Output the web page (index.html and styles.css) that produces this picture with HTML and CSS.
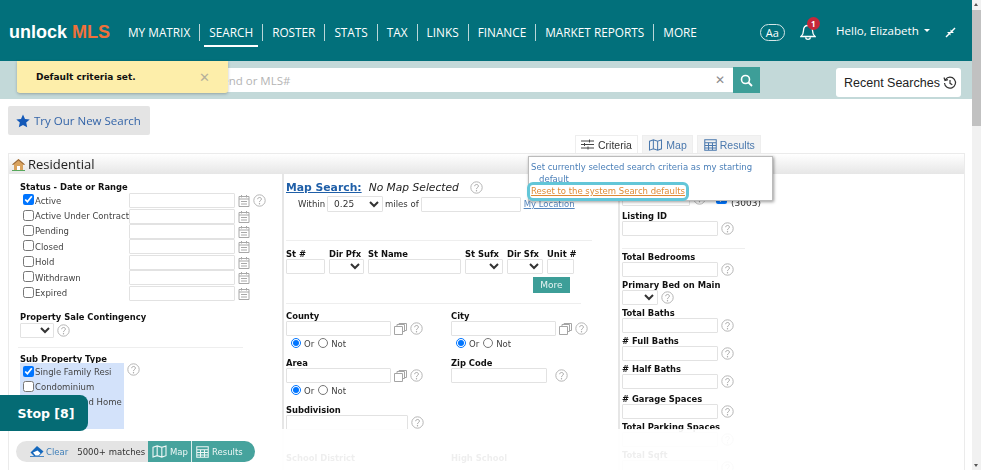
FILE: index.html
```html
<!DOCTYPE html>
<html lang="en">
<head>
  <meta charset="UTF-8">
  <meta name="viewport" content="width=device-width, initial-scale=1.0">
  <title>unlock MLS</title>
  <link rel="stylesheet" href="styles.css">
</head>
<body>

  <svg class="defs" width="0" height="0">
    <symbol id="help" viewBox="0 0 13 13">
      <circle cx="6.5" cy="6.5" r="5.7" fill="none" stroke="#b5b5b5" stroke-width="1"/>
      <path d="M4.7 5.2c0-2.3 3.7-2.3 3.7-.1 0 1.400-1.900 1.400-1.900 3" fill="none" stroke="#a5a5a5" stroke-width="1"/>
      <circle cx="6.500" cy="9.700" r=".7" fill="#a5a5a5"/>
    </symbol>
    <symbol id="cal" viewBox="0 0 12 13">
      <path d="M1 2.500h10v10h-10zM1 5h10M3.500 1v2.500M8.500 1v2.500" fill="none" stroke="#a8a8a8"/>
      <path d="M3 7h6v1h-6zM3 9.500h6v1h-6z" fill="#a8a8a8"/>
    </symbol>
    <symbol id="copy" viewBox="0 0 13 12">
      <path d="M.5 3.500h8v8h-8zM3 3.500v-2h7.500v7h-2M5 1.500v-1h7.500v7h-2" fill="none" stroke="#a5a5a5"/>
    </symbol>
    <symbol id="map" viewBox="0 0 16 14">
      <path d="M1 2.500l4.500-1.500 5 1.500 4.500-1.500v10.500l-4.500 1.500-5-1.500-4.500 1.500zM5.500 1v10.500M10.500 2.500v10.500" fill="none" stroke="currentColor" stroke-width="1.200"/>
    </symbol>
    <symbol id="grid" viewBox="0 0 15 14">
      <path d="M.8.800h13.400v12.400h-13.400zM.8 4.500h13.400M.8 7.500h13.400M.8 10.500h13.400M5.200 4.500v8.700M9.800 4.500v8.700" fill="none" stroke="currentColor" stroke-width="1.200"/>
    </symbol>
  </svg>

  <div class="page">
    <div class="main">
      <header class="topbar">
        <div class="logo">unlock <span>MLS</span></div>
        <nav class="nav">
          <a href="#">MY MATRIX</a>
          <a href="#" class="active">SEARCH</a>
          <a href="#">ROSTER</a>
          <a href="#">STATS</a>
          <a href="#">TAX</a>
          <a href="#">LINKS</a>
          <a href="#">FINANCE</a>
          <a href="#">MARKET REPORTS</a>
          <a href="#">MORE</a>
        </nav>
        <div class="aa">Aa</div>
        <div class="bell">
          <svg width="16" height="18" viewBox="0 0 16 18"><path d="M8 2.500c-3 0-4.500 2.200-4.500 5 0 3-1 4.500-2.500 6h14c-1.500-1.500-2.500-3-2.500-6 0-2.800-1.500-5-4.500-5zM5.500 14.500c.5 2.400 4.500 2.400 5 0" fill="none" stroke="#fff" stroke-width="1.300"/></svg>
          <span class="badge">1</span>
        </div>
        <div class="hello">Hello, Elizabeth <i class="caret"></i></div>
        <svg class="shrink" width="11" height="11" viewBox="0 0 11 11"><path d="M10.500 1.500l-3 3 1.500 1.500h-3.500v-3.500l1 1 3-3zM.5 9.500l3-3-1.500-1.500h3.500v3.500l-1-1-3 3z" fill="#fff"/></svg>
      </header>

      <div class="searchbar">
        <input class="quick" type="text" placeholder="Address, Street, Legend or MLS#">
        <span class="quick-x">&#10005;</span>
        <button class="quick-go">
          <svg width="13" height="13" viewBox="0 0 13 13"><circle cx="5.500" cy="5.500" r="4" fill="none" stroke="#fff" stroke-width="1.600"/><path d="M8.500 8.500l3.500 3.500" stroke="#fff" stroke-width="1.800"/></svg>
        </button>
        <button class="recent">Recent Searches
          <svg width="14" height="14" viewBox="0 0 14 14"><path d="M2.500 3.500a5.500 5.500 0 1 1-1 3.500M1 1.500l1 3 3-.8M7 4v3.300l2.300 1.400" fill="none" stroke="#333" stroke-width="1.200"/></svg>
        </button>
      </div>

      <div class="content">
        <button class="try">
          <svg width="14" height="14" viewBox="0 0 14 14"><path d="M7 .5l2 4.400 4.700.5-3.500 3.200 1 4.700-4.200-2.400-4.200 2.400 1-4.700-3.500-3.200 4.700-.5z" fill="#1459b8"/></svg>
          Try Our New Search
        </button>

        <div class="tabs">
          <a href="#" class="tab current">
            <svg width="13" height="11" viewBox="0 0 13 11"><path d="M0 2h13M0 5.500h13M0 9h13M8.500 .5v3M3.500 4v3M7 7.500v3" fill="none" stroke="#444"/></svg>
            Criteria
          </a>
          <a href="#" class="tab"><svg width="15" height="12"><use href="#map"/></svg>Map</a>
          <a href="#" class="tab"><svg width="13" height="12"><use href="#grid"/></svg>Results</a>
        </div>

        <section class="panel">
          <h2 class="panel-title">
            <svg width="13" height="13" viewBox="0 0 13 13"><path d="M6.500 1l6 5.500h-1.500v5.500h-9v-5.500h-1.500z" fill="#d9a35f"/><path d="M0 6.500l6.500-5.500 6.500 5.500-1 .5-5.500-4.500-5.500 4.500z" fill="#9a6a3a"/><path d="M5 8h3v4h-3z" fill="#fff"/><path d="M0 12h13v1h-13z" fill="#57a85c"/></svg>
            Residential
          </h2>

          <div class="columns">
            <div class="col col-status">
              <div class="label">Status - Date or Range</div>
              <div class="status-row first">
                <label class="check"><input type="checkbox" checked>Active</label>
                <input class="box range" type="text">
                <svg class="ico" width="12" height="13"><use href="#cal"/></svg>
                <svg class="ico" width="13" height="13"><use href="#help"/></svg>
              </div>
              <div class="status-row">
                <label class="check"><input type="checkbox">Active Under Contract</label>
                <input class="box range" type="text">
                <svg class="ico" width="12" height="13"><use href="#cal"/></svg>
              </div>
              <div class="status-row">
                <label class="check"><input type="checkbox">Pending</label>
                <input class="box range" type="text">
                <svg class="ico" width="12" height="13"><use href="#cal"/></svg>
              </div>
              <div class="status-row">
                <label class="check"><input type="checkbox">Closed</label>
                <input class="box range" type="text">
                <svg class="ico" width="12" height="13"><use href="#cal"/></svg>
              </div>
              <div class="status-row">
                <label class="check"><input type="checkbox">Hold</label>
                <input class="box range" type="text">
                <svg class="ico" width="12" height="13"><use href="#cal"/></svg>
              </div>
              <div class="status-row">
                <label class="check"><input type="checkbox">Withdrawn</label>
                <input class="box range" type="text">
                <svg class="ico" width="12" height="13"><use href="#cal"/></svg>
              </div>
              <div class="status-row">
                <label class="check"><input type="checkbox">Expired</label>
                <input class="box range" type="text">
                <svg class="ico" width="12" height="13"><use href="#cal"/></svg>
              </div>

              <div class="label contingency">Property Sale Contingency</div>
              <div class="line">
                <select class="box pick-34"></select>
                <svg class="ico" width="13" height="13"><use href="#help"/></svg>
              </div>
              <hr class="rule rule-status">
              <div class="label">Sub Property Type</div>
              <div class="line top">
                <div class="sublist">
                  <label class="check"><input type="checkbox" checked>Single Family Resi</label>
                  <label class="check"><input type="checkbox">Condominium</label>
                  <label class="check"><input type="checkbox">Manufactured Home</label>
                  <label class="check"><input type="checkbox">Townhouse</label>
                </div>
                <svg class="ico" width="13" height="13"><use href="#help"/></svg>
              </div>
            </div>

            <div class="col col-address">
              <div class="map-head">
                <a href="#" class="map-link">Map Search:</a>
                <em>No Map Selected</em>
                <svg width="13" height="13"><use href="#help"/></svg>
              </div>
              <div class="within">
                <span>Within</span>
                <select class="box pick-56"><option>0.25</option></select>
                <span>miles of</span>
                <input class="box w-100" type="text">
                <a href="#" class="loc">My Location</a>
              </div>
              <hr class="rule rule-map">
              <div class="street">
                <div><div class="label">St #</div><input class="box w-39" type="text"></div>
                <div><div class="label">Dir Pfx</div><select class="box pick-35"></select></div>
                <div><div class="label">St Name</div><input class="box w-93" type="text"></div>
                <div><div class="label">St Sufx</div><select class="box pick-38"></select></div>
                <div><div class="label">Dir Sfx</div><select class="box pick-36"></select></div>
                <div><div class="label">Unit #</div><input class="box w-27" type="text"></div>
              </div>
              <button class="more">More</button>
              <hr class="rule rule-more">
              <div class="pair">
                <div class="pair-cell">
                  <div class="label">County</div>
                  <div class="line">
                    <input class="box w-105" type="text">
                    <svg class="ico" width="13" height="12"><use href="#copy"/></svg>
                    <svg class="ico" width="13" height="13"><use href="#help"/></svg>
                  </div>
                  <div class="ornot"><input type="radio" name="r1" checked>Or<input type="radio" name="r1">Not</div>
                </div>
                <div class="pair-cell">
                  <div class="label">City</div>
                  <div class="line">
                    <input class="box w-105" type="text">
                    <svg class="ico" width="13" height="12"><use href="#copy"/></svg>
                    <svg class="ico" width="13" height="13"><use href="#help"/></svg>
                  </div>
                  <div class="ornot"><input type="radio" name="r2" checked>Or<input type="radio" name="r2">Not</div>
                </div>
                <div class="pair-cell">
                  <div class="label">Area</div>
                  <div class="line">
                    <input class="box w-105" type="text">
                    <svg class="ico" width="13" height="12"><use href="#copy"/></svg>
                    <svg class="ico" width="13" height="13"><use href="#help"/></svg>
                  </div>
                  <div class="ornot"><input type="radio" name="r3" checked>Or<input type="radio" name="r3">Not</div>
                </div>
                <div class="pair-cell">
                  <div class="label">Zip Code</div>
                  <div class="line">
                    <input class="box w-96" type="text">
                    <svg class="ico zip-help" width="13" height="13"><use href="#help"/></svg>
                  </div>
                </div>
              </div>
              <div class="label">Subdivision</div>
              <div class="line">
                <input class="box w-122" type="text">
                <svg class="ico" width="13" height="13"><use href="#help"/></svg>
              </div>
              <div class="pair school">
                <div class="label">School District</div>
                <div class="label">High School</div>
              </div>
            </div>

            <div class="col col-detail">
              <div class="line partial">
                <input class="box w-68" type="text">
                <svg class="ico" width="13" height="13"><use href="#help"/></svg>
                <input class="partial-check" type="checkbox" checked>
                <span class="partial-count">(3003)</span>
              </div>
              <div class="field"><div class="label">Listing ID</div><div class="line"><input class="box w-96" type="text"><svg class="ico" width="13" height="13"><use href="#help"/></svg></div></div>
              <hr class="rule rule-detail">
              <div class="field"><div class="label">Total Bedrooms</div><div class="line"><input class="box w-96" type="text"><svg class="ico" width="13" height="13"><use href="#help"/></svg></div></div>
              <div class="field"><div class="label">Primary Bed on Main</div><div class="line"><select class="box pick-36"></select><svg class="ico" width="13" height="13"><use href="#help"/></svg></div></div>
              <div class="field"><div class="label">Total Baths</div><div class="line"><input class="box w-96" type="text"><svg class="ico" width="13" height="13"><use href="#help"/></svg></div></div>
              <div class="field"><div class="label"># Full Baths</div><div class="line"><input class="box w-96" type="text"><svg class="ico" width="13" height="13"><use href="#help"/></svg></div></div>
              <div class="field"><div class="label"># Half Baths</div><div class="line"><input class="box w-96" type="text"><svg class="ico" width="13" height="13"><use href="#help"/></svg></div></div>
              <div class="field garage"><div class="label"># Garage Spaces</div><div class="line"><input class="box w-96" type="text"><svg class="ico" width="13" height="13"><use href="#help"/></svg></div></div>
              <div class="field"><div class="label">Total Parking Spaces</div><div class="line"><input class="box w-96" type="text"><svg class="ico" width="13" height="13"><use href="#help"/></svg></div></div>
              <div class="field"><div class="label">Total Sqft</div><div class="line"><input class="box w-96" type="text"><svg class="ico" width="13" height="13"><use href="#help"/></svg></div></div>
            </div>
          </div>

          <div class="fade"></div>
        </section>
      </div>

      <div class="toast">
        <span>Default criteria set.</span>
        <span class="toast-x">&#10005;</span>
      </div>

      <div class="popup">
        <a href="#" class="popup-set">Set currently selected search criteria as my starting default</a>
        <a href="#" class="popup-reset">Reset to the system Search defaults</a>
      </div>

      <button class="stop">Stop [8]</button>

      <div class="matchbar">
        <a href="#" class="clear">
          <svg width="14" height="11" viewBox="0 0 14 11"><path d="M7 0l6.500 5.500-4.500 4.500h-5l-3.500-3.500z" fill="#1468bd"/><path d="M3 6.500l2.500 3h3l2-2.200-3-2.800z" fill="#fff"/><path d="M0 10.300h14v.7h-14z" fill="#1468bd"/></svg>
          Clear
        </a>
        <span class="count">5000+ matches</span>
        <div class="match-actions">
          <a href="#"><svg width="15" height="13"><use href="#map"/></svg>Map</a>
          <a href="#"><svg width="13" height="12"><use href="#grid"/></svg>Results</a>
        </div>
      </div>
    </div>

    <div class="scrollbar"><div class="thumb"></div></div>
  </div>

</body>
</html>
```

FILE: styles.css
```css
* {
  box-sizing: border-box;
}

html, body {
  margin: 0;
  padding: 0;
  height: 470px;
  overflow: hidden;
  background: #fff;
}

body {
  font-family: "DejaVu Sans", Verdana, sans-serif;
  font-size: 8.5px;
  color: #333;
}

a {
  text-decoration: none;
}

button {
  font-family: inherit;
  cursor: pointer;
}

.defs {
  position: absolute;
}

.page {
  display: flex;
  height: 470px;
  filter: blur(.4px);
}

.main {
  position: relative;
  width: 972px;
  height: 470px;
  overflow: hidden;
}

/* top bar */
.topbar {
  display: flex;
  align-items: center;
  height: 61px;
  padding: 3px 0 0 9px;
  background: #02707b;
  color: #fff;
  font-family: "Open Sans", sans-serif;
}

.logo {
  flex: none;
  width: 110px;
  font-family: "Liberation Sans", sans-serif;
  font-size: 18px;
  font-weight: bold;
  white-space: nowrap;
}

.logo span {
  color: #f0703a;
}

.nav {
  display: flex;
  flex: none;
  align-items: center;
}

.nav a {
  position: relative;
  padding: 0 9px;
  border-left: 1px solid #b9d6d8;
  color: #fff;
  font-size: 11.8px;
  line-height: 17px;
  white-space: nowrap;
}

.nav a:first-child {
  border-left: 0;
}

.nav a.active::after {
  content: "";
  position: absolute;
  left: 4px;
  right: 4px;
  bottom: -6px;
  height: 1.5px;
  background: #fff;
}

.aa {
  flex: none;
  width: 25px;
  height: 17px;
  margin-left: 54px;
  border: 1px solid #d5e6e7;
  border-radius: 9px;
  font-size: 11px;
  line-height: 15px;
  text-align: center;
}

.bell {
  position: relative;
  flex: none;
  width: 16px;
  height: 18px;
  margin-left: 15px;
}

.badge {
  position: absolute;
  top: -6px;
  left: 7px;
  width: 13px;
  height: 13px;
  border-radius: 50%;
  background: #c4283a;
  font-size: 8px;
  font-weight: bold;
  line-height: 13px;
  text-align: center;
}

.hello {
  display: flex;
  flex: none;
  align-items: center;
  margin: -3px 0 0 20px;
  font-size: 11.6px;
  white-space: nowrap;
}

.caret {
  width: 0;
  height: 0;
  margin-left: 5px;
  border: 3px solid transparent;
  border-top: 3px solid #fff;
  border-bottom: 0;
}

.shrink {
  flex: none;
  margin-left: 15px;
}

/* search bar */
.searchbar {
  display: flex;
  align-items: center;
  height: 38px;
  padding-left: 17px;
  background: #c3d9d9;
}

.quick {
  width: 716px;
  height: 24px;
  padding: 0 26px 0 99px;
  border: 0;
  background: #fff;
  font-family: "Open Sans", sans-serif;
  font-size: 11.5px;
}

.quick::placeholder {
  color: #b4b4b4;
}

.quick-x {
  position: absolute;
  left: 715px;
  top: 73px;
  color: #8c8c8c;
  font-size: 12px;
}

.quick-go {
  display: flex;
  align-items: center;
  justify-content: center;
  width: 27px;
  height: 26px;
  padding: 0;
  border: 0;
  background: #3d9e98;
}

.recent {
  display: flex;
  align-items: center;
  gap: 3px;
  width: 125px;
  height: 29px;
  margin: 5px 0 0 76px;
  padding: 0 0 0 8px;
  border: 0;
  border-radius: 3px;
  background: #fff;
  color: #222;
  font-family: "Liberation Sans", sans-serif;
  font-size: 12.5px;
  white-space: nowrap;
}

/* page content */
.content {
  padding: 7px 7px 0 8px;
}

.try {
  display: flex;
  align-items: center;
  gap: 4px;
  width: 142px;
  height: 29px;
  padding: 0 0 0 8px;
  border: 0;
  border-radius: 2px;
  background: #e4e4e4;
  color: #3364a8;
  font-family: "Open Sans", sans-serif;
  font-size: 11.5px;
  white-space: nowrap;
}

.tabs {
  display: flex;
  gap: 4px;
  height: 18px;
  margin-left: 567px;
}

.tab {
  display: flex;
  align-items: center;
  justify-content: center;
  gap: 3px;
  height: 18px;
  padding: 0 5.5px;
  border: 1px solid #eee;
  border-bottom: 0;
  background: #f3f3f3;
  color: #4a78ad;
  font-family: "Liberation Sans", sans-serif;
  font-size: 10.5px;
}

.tab.current {
  gap: 4px;
  padding: 0 5px;
  background: #fff;
  color: #333;
}

.panel {
  position: relative;
  height: 320px;
  border: 1px solid #ebebeb;
  border-bottom: 0;
}

.panel-title {
  display: flex;
  align-items: center;
  gap: 3px;
  height: 20px;
  margin: 0;
  padding-left: 3px;
  background: linear-gradient(#fff, #e6e6e6);
  color: #222;
  font-family: "Open Sans", sans-serif;
  font-size: 13px;
  font-weight: normal;
}

.columns {
  display: grid;
  grid-template-columns: 273px 336px 1fr;
}

.col {
  height: 300px;
}

.col-status {
  padding: 8px 0 0 11px;
}

.col-address {
  padding: 6px 0 0 2px;
  border-left: 2px solid #e6e6e6;
}

.col-detail {
  padding: 17px 0 0 2px;
  border-left: 2px solid #e6e6e6;
}

.label {
  color: #111;
  font-size: 8.4px;
  font-weight: bold;
  line-height: 10px;
  white-space: nowrap;
}

.box {
  display: block;
  height: 15px;
  margin: 0;
  padding: 0 0 0 2px;
  border: 1px solid #e2e2e2;
  border-radius: 1px;
  background: #fff;
  font-family: inherit;
  font-size: 9px;
  color: #333;
}

.rule {
  height: 0;
  margin: 0;
  border: 0;
  border-top: 1px solid #eee;
}

.line {
  display: flex;
  align-items: center;
}

.line.top {
  align-items: flex-start;
  margin-top: -1px;
}

.ico {
  flex: none;
  margin-left: 3px;
}

/* sizes for form boxes */
.range { width: 106px; }
.w-27 { width: 27px; }
.w-39 { width: 39px; }
.w-68 { width: 68px; }
.w-93 { width: 93px; }
.w-96 { width: 96px; }
.w-100 { width: 100px; }
.w-105 { width: 105px; }
.w-122 { width: 122px; }
.pick-34 { width: 34px; }
.pick-35 { width: 35px; }
.pick-36 { width: 36px; }
.pick-38 { width: 38px; }
.pick-56 { width: 56px; height: 16px; }

/* status column */
.status-row {
  display: flex;
  align-items: center;
  height: 15.4px;
}

.status-row.first {
  margin-top: 1px;
}

.check {
  display: flex;
  align-items: center;
  color: #444;
  white-space: nowrap;
}

.check input {
  width: 11px;
  height: 11px;
  margin: 0 1px 2px 0;
  flex: none;
}

.status-row .check {
  width: 109px;
  padding-left: 3px;
}

.contingency {
  margin-top: 11px;
}

.contingency + .line {
  margin-top: 1px;
}

.rule-status {
  width: 225px;
  margin: 9px 0 6px -2px;
}

.sublist {
  display: flex;
  flex-direction: column;
  width: 104px;
  height: 66px;
  padding: 2px 0 0 3px;
  background: #d3e2fa;
}

.sublist .check {
  height: 15px;
}

/* address column */
.map-head {
  display: flex;
  align-items: center;
  height: 14px;
}

.map-link {
  color: #1f5fa8;
  font-size: 10.8px;
  font-weight: bold;
  text-decoration: underline;
}

.map-head em {
  margin: 0 11px 0 7px;
  color: #222;
  font-size: 10.7px;
  white-space: nowrap;
}

.within {
  display: flex;
  align-items: center;
  gap: 2px;
  height: 16px;
  margin-top: 2px;
  padding-left: 12px;
  white-space: nowrap;
}

.loc {
  margin-left: 1px;
  color: #5585bd;
  text-decoration: underline;
}

.rule-map {
  width: 306px;
  margin-top: 28px;
  margin-bottom: 8px;
}

.street {
  display: flex;
  gap: 4px;
}

.more {
  display: block;
  width: 37px;
  height: 16px;
  margin: 3px 0 0 247px;
  padding: 0;
  border: 0;
  background: #3d9e98;
  color: #e6f3f2;
  font-size: 9px;
}

.rule-more {
  width: 295px;
  margin-top: 10px;
  margin-bottom: 7px;
}

.pair {
  display: grid;
  grid-template-columns: 165px 1fr;
}

.pair-cell {
  height: 47px;
}

.ornot {
  display: flex;
  align-items: center;
  gap: 2px;
  height: 14px;
  margin-top: 1px;
  padding-left: 3px;
  color: #444;
}

.ornot input {
  width: 10px;
  height: 10px;
  margin: 0 1px 2px 2px;
}

.zip-help {
  margin-left: 8px;
}

.school {
  margin-top: 23px;
}

/* detail column */
.partial {
  height: 15px;
  white-space: nowrap;
}

.partial-check {
  width: 11px;
  height: 11px;
  margin: 0 4px 0 10px;
}

.partial-count {
  margin-top: 8px;
  font-size: 9px;
}

.field {
  height: 28px;
}

.partial + .field {
  margin-top: 5px;
}

.garage {
  margin-top: 2px;
}

.rule-detail {
  width: 123px;
  margin-top: 9px;
  margin-bottom: 3px;
}

/* things lying over the page */
.fade {
  position: absolute;
  left: 0;
  right: 0;
  top: 275px;
  bottom: 0;
  background: rgba(255, 255, 255, .93);
}

.toast {
  position: absolute;
  left: 17px;
  top: 61px;
  display: flex;
  align-items: center;
  justify-content: space-between;
  width: 211px;
  height: 32px;
  padding: 0 18px 0 19px;
  border-radius: 0 0 3px 3px;
  background: #fdeeaa;
  box-shadow: 0 1px 3px rgba(0, 0, 0, .25);
  color: #111;
  font-size: 9px;
  font-weight: bold;
}

.toast-x {
  color: #b5b09a;
  font-size: 13px;
}

.popup {
  position: absolute;
  left: 528px;
  top: 156px;
  width: 245px;
  height: 45px;
  padding: 4px 2px;
  border: 1px solid #bbb;
  background: #fff;
  box-shadow: 1px 1px 3px rgba(0, 0, 0, .4);
  line-height: 12px;
}

.popup-set {
  display: block;
  padding-left: 8px;
  text-indent: -8px;
  color: #4a7fb8;
}

.popup-reset {
  position: absolute;
  left: -2px;
  top: 25px;
  padding: 1px;
  border: 3px solid #63c6d8;
  border-radius: 6px;
  color: #e08a35;
  text-decoration: underline;
  white-space: nowrap;
  line-height: 11px;
}

.stop {
  position: absolute;
  left: 0;
  top: 395px;
  width: 88px;
  height: 36px;
  padding: 0 0 0 4px;
  border: 0;
  border-radius: 0 8px 8px 0;
  background: #056b74;
  color: #fff;
  font-size: 12.5px;
  font-weight: bold;
}

.matchbar {
  position: absolute;
  left: 16px;
  top: 441px;
  display: flex;
  align-items: center;
  width: 239px;
  height: 21px;
  padding-left: 14px;
  border-radius: 11px;
  background: #e4e4e4;
  overflow: hidden;
}

.clear {
  display: flex;
  align-items: center;
  gap: 2px;
  color: #3f7fb8;
}

.count {
  margin-left: 9px;
  color: #333;
  white-space: nowrap;
}

.match-actions {
  display: grid;
  flex: none;
  grid-template-columns: 43px 64px;
  width: 107px;
  height: 21px;
  margin-left: auto;
  background: #46a39d;
}

.match-actions a {
  display: flex;
  align-items: center;
  gap: 3px;
  padding-left: 4px;
  border-left: 1px solid #dfeeed;
  color: #eef7f6;
}

.match-actions a:first-child {
  border-left: 0;
}

/* browser scrollbar */
.scrollbar {
  position: relative;
  width: 9px;
  height: 470px;
  padding-top: 10px;
  background: #f1f1f1;
}

.scrollbar::before,
.scrollbar::after {
  content: "";
  position: absolute;
  left: 2px;
  border: 2.5px solid transparent;
}

.scrollbar::before {
  top: 1px;
  border-bottom: 3px solid #555;
}

.scrollbar::after {
  bottom: 1px;
  border-top: 3px solid #555;
}

.thumb {
  height: 116px;
  background: #c1c1c1;
}
```
